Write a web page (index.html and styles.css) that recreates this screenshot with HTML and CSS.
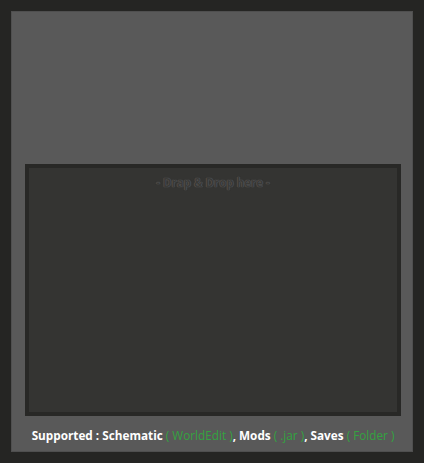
FILE: index.html
```html
<!DOCTYPE html>
<html lang="en">
<head>
    <meta charset="UTF-8">
    <title>Drop Zone</title>
    <link rel="stylesheet" href="styles.css">
</head>
<body>
  <div class="frame">
    <div class="dropzone">
        <span class="hint">- Drap &amp; Drop here -</span>
    </div>
    <div class="supported">
        Supported : Schematic <span class="ext">( WorldEdit )</span>, Mods <span class="ext">( .jar )</span>, Saves <span class="ext">( Folder )</span>
    </div>
  </div>
</body>
</html>
```

FILE: styles.css
```css
html, body {
    margin: 0;
    padding: 0;
    height: 100%;
}
body {
    background-color: #252523;
    font-family: "Open Sans", sans-serif;
    padding: 11px;
    box-sizing: border-box;
    height: 463px;
}
.frame {
    height: 100%;
    box-sizing: border-box;
    background-color: #595959;
    border: 1px solid #4f4f4f;
    display: flex;
    flex-direction: column;
    padding: 152px 11px 0 13px;
}
.dropzone {
    height: 252px;
    flex-shrink: 0;
    box-sizing: border-box;
    background-color: #343432;
    border: 4px solid #282826;
    display: flex;
    justify-content: center;
    align-items: flex-start;
    padding-top: 7px;
}
.hint {
    color: #3a3a38;
    font-weight: bold;
    font-size: 11.5px;
    text-shadow: 0 0 1px #606060, 0 0 1px #606060;
}
.supported {
    text-align: center;
    color: #ffffff;
    font-weight: bold;
    font-size: 11.75px;
    margin-top: 11px;
    white-space: nowrap;
}
.ext {
    color: #33a340;
    font-weight: normal;
}
```
